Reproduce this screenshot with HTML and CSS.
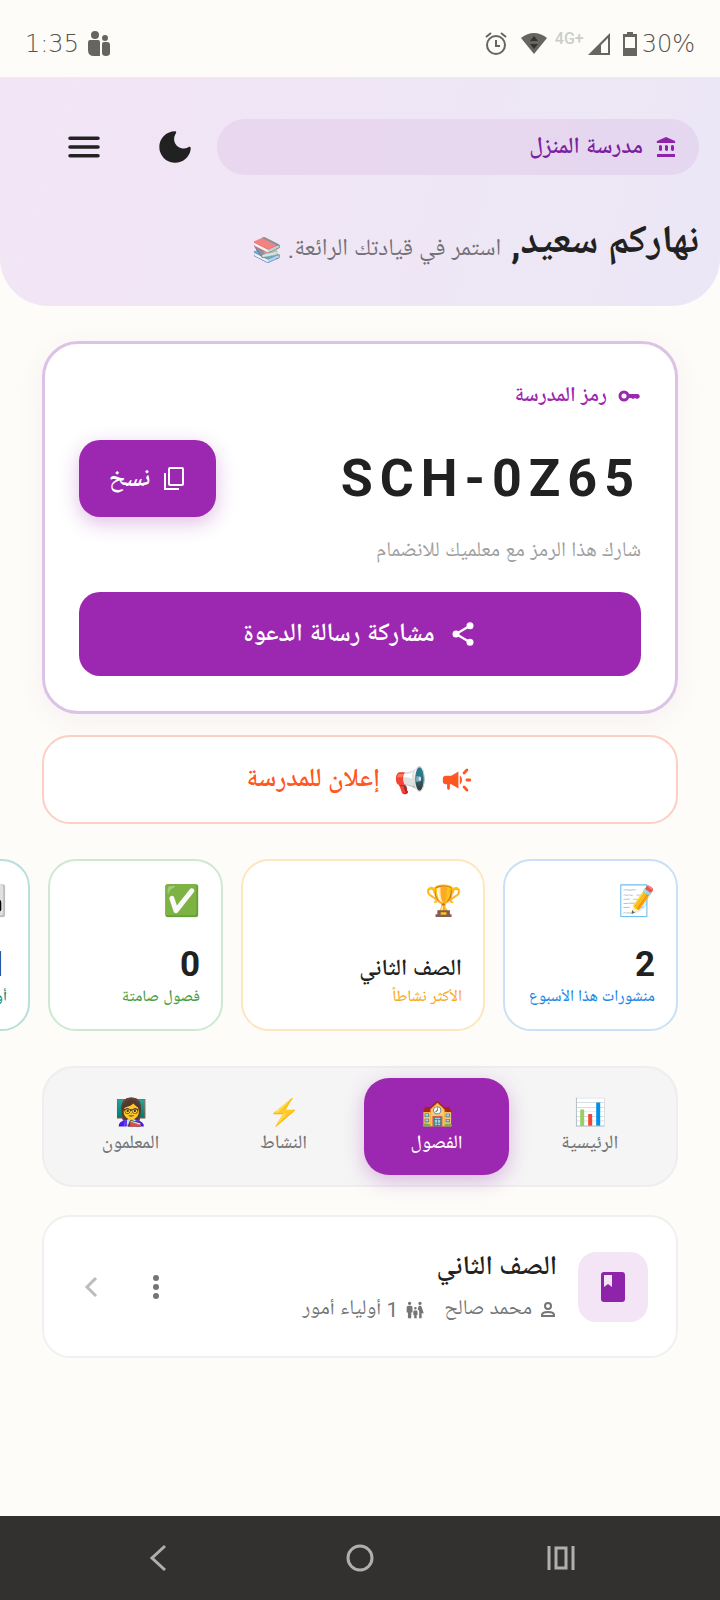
FILE: index.html
```html
<!DOCTYPE html>
<html lang="ar" dir="rtl">
<head>
    <meta charset="UTF-8">
    <meta name="viewport" content="width=device-width, initial-scale=1.0">
    <title>مدرسة المنزل</title>
    <link rel="stylesheet" href="styles.css">
</head>
<body>
    <div class="status-bar" dir="ltr">
        <span class="clock">1:35</span>
        <svg class="people" width="24" height="28" viewBox="0 0 24 28">
            <circle cx="8" cy="5" r="4"/>
            <circle cx="18" cy="8" r="3"/>
            <path d="M3 10h8q2 0 2 2v14H7q-6 0-6-6v-7q0-3 2-3zM17 12h3q3 0 3 3v8q0 3-4 3t-4-3v-9q0-2 2-2z"/>
        </svg>
        <svg class="alarm" width="24" height="26" viewBox="0 0 24 26">
            <circle cx="12" cy="14" r="9"/>
            <path d="M12 9v6h4M2 6l5-4M22 6l-5-4"/>
        </svg>
        <svg class="wifi" width="26" height="24" viewBox="0 0 26 24">
            <path d="M0 6Q13-4 26 6L13 22z"/>
            <path class="dark" d="M13 4l4 5H9zM13 17l4-5H9z"/>
        </svg>
        <span class="net">4G+</span>
        <svg class="signal" width="22" height="22" viewBox="0 0 22 22">
            <path d="M0 22L22 0v22zM13 12v8h7V5z" fill-rule="evenodd"/>
        </svg>
        <svg class="battery" width="14" height="24" viewBox="0 0 14 24">
            <path d="M4 0h6v2h4v22H0V2h4zM2 5v11h10V5z" fill-rule="evenodd"/>
        </svg>
        <span class="percent">30%</span>
    </div>

    <header>
        <div class="top-row">
            <div class="school-pill">
                <svg width="22" height="22" viewBox="0 0 22 22">
                    <path d="M11 1l9 4q1 2-1 2H3Q1 7 2 5zM4 10q1-2 3 0v4q-1 2-3 0zM10 10q1-2 3 0v4q-1 2-3 0zM16 10q1-2 3 0v4q-1 2-3 0zM2 18h18v3H2z"/>
                </svg>
                <span>مدرسة المنزل</span>
            </div>
            <button class="icon-btn" aria-label="الوضع الداكن">
                <svg width="42" height="42" viewBox="0 0 24 24">
                    <path d="M12 3a9 9 0 1 0 9 9.8c0-.9-.7-1.200-1.400-.7a5.400 5.400 0 0 1-7.400-7.400C12.900 3.800 13 3 12 3z"/>
                </svg>
            </button>
            <button class="icon-btn" aria-label="القائمة">
                <svg width="42" height="42" viewBox="0 0 24 24">
                    <path d="M4 7h16M4 12h16M4 17h16" stroke="#222" stroke-width="2" stroke-linecap="round"/>
                </svg>
            </button>
        </div>
        <h1>نهاركم سعيد, <small>استمر في قيادتك الرائعة. 📚</small></h1>
    </header>

    <main>
        <section class="code-card">
            <div class="code-label">
                <svg width="24" height="16" viewBox="0 0 24 16">
                    <circle cx="7" cy="8" r="4" fill="none" stroke="#9c27b0" stroke-width="3"/>
                    <path d="M12 6h9q3 2 1 4l-2 1-2-1-2 1-2-1h-2z"/>
                </svg>
                <span>رمز المدرسة</span>
            </div>
            <div class="code-row">
                <span class="code" dir="ltr">SCH-0Z65</span>
                <button class="copy-btn">
                    <svg width="24" height="26" viewBox="0 0 24 26">
                        <rect x="7" y="2" width="14" height="17" rx="1"/>
                        <path d="M3 7v16h14"/>
                    </svg>
                    نسخ
                </button>
            </div>
            <p class="hint">شارك هذا الرمز مع معلميك للانضمام</p>
            <button class="share-btn">
                <svg width="28" height="28" viewBox="0 0 24 24">
                    <path d="M6 12l12-7M6 12l12 7" stroke="#fff" stroke-width="2"/>
                    <circle cx="6" cy="12" r="3"/><circle cx="18" cy="5" r="3"/><circle cx="18" cy="19" r="3"/>
                </svg>
                مشاركة رسالة الدعوة
            </button>
        </section>

        <button class="announce">
            <svg width="34" height="34" viewBox="0 0 24 24">
                <path d="M4 9c-1.100 0-2 .9-2 2v2c0 1.100.9 2 2 2h1v3q1 2 2 0v-3h1l5 3V6L8 9H4zm11.500 3c0-1.330-.58-2.530-1.500-3.350v6.690c.92-.81 1.500-2.010 1.500-3.340z"/>
                <path d="M19 12h2M17 17l2 2M17 7l2-2" stroke="#ff5722" stroke-width="2" stroke-linecap="round"/>
            </svg>
            <span class="emoji">📢</span>
            <span>إعلان للمدرسة</span>
        </button>

        <section class="stats">
            <div class="stat blue">
                <span class="emoji">📝</span>
                <strong>2</strong>
                <span class="stat-label">منشورات هذا الأسبوع</span>
            </div>
            <div class="stat wide orange">
                <span class="emoji">🏆</span>
                <strong class="name">الصف الثاني</strong>
                <span class="stat-label">الأكثر نشاطاً</span>
            </div>
            <div class="stat green">
                <span class="emoji">✅</span>
                <strong>0</strong>
                <span class="stat-label">فصول صامتة</span>
            </div>
            <div class="stat teal">
                <span class="emoji">👪</span>
                <strong>1</strong>
                <span class="stat-label">أولياء أمور</span>
            </div>
        </section>

        <nav class="tabs">
            <button><span class="emoji">📊</span>الرئيسية</button>
            <button class="active"><span class="emoji">🏫</span>الفصول</button>
            <button><span class="emoji">⚡️</span>النشاط</button>
            <button><span class="emoji">👩‍🏫</span>المعلمون</button>
        </nav>

        <section class="class-card">
            <div class="class-icon">
                <svg width="24" height="30" viewBox="0 0 24 30">
                    <rect width="24" height="30" rx="3" fill="#8e24aa"/>
                    <path d="M3 3h8v12l-4-3-4 3z" fill="#f3e5f5"/>
                </svg>
            </div>
            <div class="class-info">
                <h2>الصف الثاني</h2>
                <div class="meta">
                    <svg width="18" height="18" viewBox="0 0 18 18">
                        <circle cx="9" cy="5" r="3" fill="none" stroke="#757575" stroke-width="2"/>
                        <path d="M3 15v-1q0-3 6-3t6 3v1z" fill="none" stroke="#757575" stroke-width="2"/>
                    </svg>
                    <span>محمد صالح</span>
                    <svg class="family" width="20" height="20" viewBox="0 0 24 24">
                        <path d="M16 4c0-1.110.89-2 2-2s2 .89 2 2-.89 2-2 2-2-.89-2-2zm4 18v-6h2.500l-2.540-7.630C19.680 7.550 18.920 7 18.060 7h-.12c-.86 0-1.630.55-1.900 1.370l-.86 2.580c1.080.6 1.820 1.730 1.820 3.050v8h3zm-7.500-10.500c.83 0 1.500-.67 1.500-1.500s-.67-1.500-1.500-1.500S11 9.170 11 10s.67 1.500 1.500 1.500zM5.500 6c1.110 0 2-.89 2-2s-.89-2-2-2-2 .89-2 2 .89 2 2 2zm2 16v-7H9V9c0-1.100-.9-2-2-2H4c-1.100 0-2 .9-2 2v6h1.500v7h4zm6.500 0v-4h1v-4c0-.82-.68-1.500-1.500-1.500h-2c-.82 0-1.500.68-1.500 1.500v4h1v4h3z"/>
                    </svg>
                    <span>1 أولياء أمور</span>
                </div>
            </div>
            <button class="icon-btn more" aria-label="المزيد">
                <svg width="8" height="24" viewBox="0 0 8 24">
                    <circle cx="4" cy="3" r="3"/><circle cx="4" cy="12" r="3"/><circle cx="4" cy="21" r="3"/>
                </svg>
            </button>
            <svg class="chevron" width="14" height="20" viewBox="0 0 14 20">
                <path d="M12 1L3 10l9 9"/>
            </svg>
        </section>
    </main>

    <footer class="nav-bar" dir="ltr">
        <button aria-label="رجوع">
            <svg width="28" height="28" viewBox="0 0 28 28"><path d="M20 2L7 14l13 12"/></svg>
        </button>
        <button aria-label="الرئيسية">
            <svg width="28" height="28" viewBox="0 0 28 28"><circle cx="14" cy="14" r="12"/></svg>
        </button>
        <button aria-label="التطبيقات">
            <svg width="28" height="28" viewBox="0 0 28 28"><path d="M2 2v24M26 2v24M9 4h10v20H9z"/></svg>
        </button>
    </footer>
</body>
</html>
```

FILE: styles.css
```css
* {
    box-sizing: border-box;
}
body {
    margin: 0;
    min-height: 100vh;
    display: flex;
    flex-direction: column;
    background-color: #fdfcf8;
    color: #212121;
    font-family: Roboto, "Noto Naskh Arabic UI", "Noto Naskh Arabic", "DejaVu Sans", sans-serif;
    overflow-x: hidden;
}
button {
    font-family: inherit;
    border: none;
    background: none;
    padding: 0;
    cursor: pointer;
}
svg {
    flex: none;
}

/* status bar */
.status-bar {
    height: 77px;
    padding: 10px 25px 0;
    display: flex;
    align-items: center;
    font-family: "DejaVu Sans", sans-serif;
    font-size: 24px;
    font-weight: 200;
    color: #555450;
    fill: #666560;
}
.people {
    margin-left: 8px;
}
.alarm {
    margin-left: auto;
    fill: none;
    stroke: #666560;
    stroke-width: 2;
}
.wifi {
    margin-left: 13px;
}
.wifi .dark {
    fill: #333;
}
.net {
    margin: 0 4px 10px 8px;
    font-family: Roboto, sans-serif;
    font-size: 16px;
    font-weight: 500;
    color: #ccc;
}
.battery {
    margin: 0 5px 0 13px;
}

/* header */
header {
    min-height: 229px;
    padding: 42px 21px 0 42px;
    border-radius: 0 0 48px 48px;
    background: linear-gradient(107deg, #f3e5f5, #ebe7f6);
}
.top-row {
    display: flex;
    align-items: center;
}
.school-pill {
    flex: 1;
    height: 56px;
    border-radius: 28px;
    padding: 0 22px;
    display: flex;
    align-items: center;
    gap: 12px;
    background-color: rgba(156, 39, 176, 0.08);
    color: #7b1fa2;
    fill: #8e24aa;
    font-size: 23px;
    font-weight: 600;
}
.icon-btn {
    width: 84px;
    height: 56px;
    display: flex;
    align-items: center;
    justify-content: center;
    fill: #212121;
}
.icon-btn + .icon-btn {
    margin-right: 7px;
}
h1 {
    margin: 44px 0 0;
    font-size: 39px;
    line-height: 52px;
    font-weight: 700;
}
h1 small {
    font-size: 24px;
    font-weight: 400;
    opacity: 0.6;
}

main {
    padding: 35px 42px 40px;
}

/* school code */
.code-card {
    padding: 34px 34px 35px;
    border: 3px solid #dcc2e6;
    border-radius: 36px;
    background-color: #fff;
    box-shadow: 0 6px 28px rgba(156, 39, 176, 0.06);
}
.code-label {
    height: 36px;
    display: flex;
    align-items: center;
    gap: 10px;
    color: #9c27b0;
    fill: #9c27b0;
    font-size: 21px;
    font-weight: 600;
}
.code-row {
    display: flex;
    align-items: center;
    justify-content: space-between;
    margin-top: 26px;
}
.code {
    font-size: 52px;
    font-weight: 700;
    letter-spacing: 7px;
}
.copy-btn {
    width: 137px;
    height: 77px;
    display: flex;
    align-items: center;
    justify-content: center;
    gap: 12px;
    border-radius: 21px;
    background-color: #9c27b0;
    color: #fff;
    font-size: 25px;
    font-weight: 600;
    box-shadow: 0 6px 20px rgba(156, 39, 176, 0.3);
}
.copy-btn svg {
    fill: none;
    stroke: #fff;
    stroke-width: 2;
}
.hint {
    margin: 18px 0 22px;
    color: #9e9e9e;
    font-size: 21px;
    line-height: 35px;
}
.share-btn {
    width: 100%;
    height: 84px;
    display: flex;
    align-items: center;
    justify-content: center;
    gap: 14px;
    border-radius: 21px;
    background-color: #9c27b0;
    color: #fff;
    fill: #fff;
    font-size: 25px;
    font-weight: 600;
}

.announce {
    width: 100%;
    height: 89px;
    margin-top: 21px;
    display: flex;
    align-items: center;
    justify-content: center;
    gap: 14px;
    border: 2px solid #fccfc4;
    border-radius: 28px;
    background-color: #fff;
    color: #ff5722;
    fill: #ff5722;
    font-size: 26px;
    font-weight: 600;
}

/* stats run off the left edge */
.stats {
    display: flex;
    gap: 18px;
    margin: 35px 0 35px -42px;
    overflow: hidden;
}
.stat {
    flex: none;
    width: 175px;
    height: 172px;
    padding: 22px 21px 19px;
    display: flex;
    flex-direction: column;
    border: 2px solid;
    border-radius: 28px;
    background-color: #fff;
}
.stat.wide {
    width: 244px;
}
.stat .emoji {
    font-size: 30px;
    line-height: 36px;
}
.stat strong {
    margin-top: auto;
    font-size: 35px;
    line-height: 42px;
    color: #212121;
}
.stat strong.name {
    font-size: 23px;
    line-height: 30px;
    font-weight: 600;
}
.stat-label {
    font-size: 16px;
    line-height: 24px;
    font-weight: 500;
    white-space: nowrap;
}
.blue {
    border-color: #c8e1f8;
    color: #1e88e5;
}
.orange {
    border-color: #fde7c0;
    color: #f9a825;
}
.green {
    border-color: #cfe8d0;
    color: #43a047;
}
.teal {
    border-color: #b8dfdc;
    color: #00897b;
}

/* tabs */
.tabs {
    display: flex;
    gap: 8px;
    padding: 10px 14px;
    border: 2px solid #eee;
    border-radius: 32px;
    background-color: #f5f5f5;
}
.tabs button {
    flex: 1;
    height: 97px;
    padding-top: 2px;
    display: flex;
    flex-direction: column;
    align-items: center;
    justify-content: center;
    border-radius: 25px;
    color: #757575;
    font-size: 19px;
    line-height: 32px;
    font-weight: 500;
}
.tabs .emoji {
    font-size: 26px;
    line-height: 34px;
}
.tabs .active {
    background-color: #9c27b0;
    color: #fff;
    box-shadow: 0 6px 20px rgba(156, 39, 176, 0.3);
}

/* class */
.class-card {
    min-height: 143px;
    margin-top: 28px;
    padding: 0 28px 0 40px;
    display: flex;
    align-items: center;
    border: 2px solid #f0f0f0;
    border-radius: 28px;
    background-color: #fff;
}
.class-icon {
    width: 70px;
    height: 70px;
    display: flex;
    align-items: center;
    justify-content: center;
    border-radius: 18px;
    background-color: #f3e5f5;
}
.class-info {
    flex: 1;
    margin-right: 21px;
    padding-top: 4px;
}
h2 {
    margin: 0;
    font-size: 27px;
    line-height: 42px;
    font-weight: 600;
}
.meta {
    display: flex;
    align-items: center;
    gap: 7px;
    color: #757575;
    fill: #757575;
    font-size: 21px;
    line-height: 40px;
}
.family {
    margin-right: 12px;
}
.more {
    width: 84px;
    fill: #757575;
}
.chevron {
    margin-right: 16px;
    fill: none;
    stroke: #bdbdbd;
    stroke-width: 3;
}

/* system buttons */
.nav-bar {
    margin-top: auto;
    height: 84px;
    display: flex;
    align-items: center;
    justify-content: center;
    gap: 173px;
    background-color: #33312f;
}
.nav-bar svg {
    display: block;
    fill: none;
    stroke: #b0afad;
    stroke-width: 3;
}
```
